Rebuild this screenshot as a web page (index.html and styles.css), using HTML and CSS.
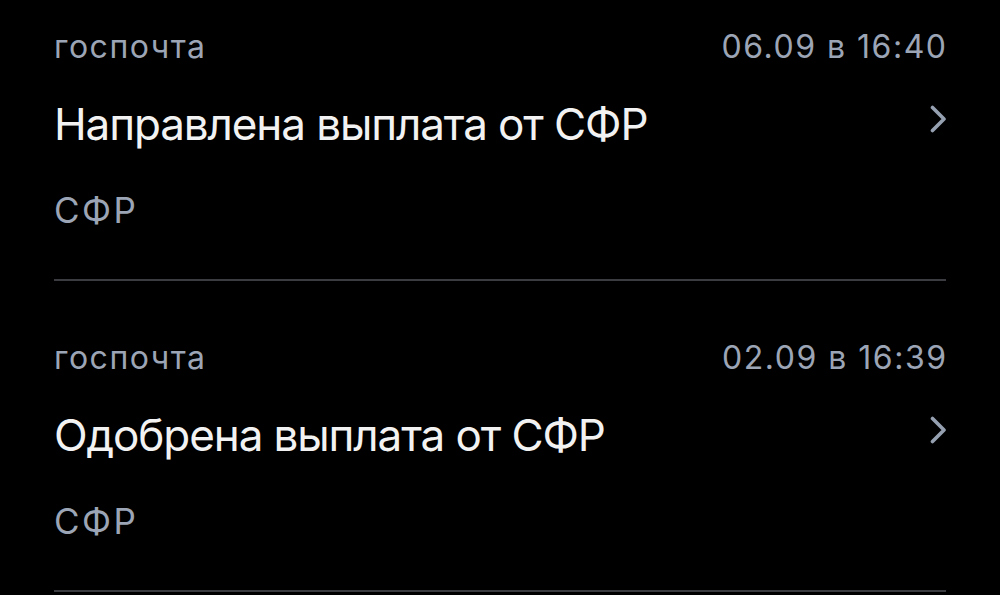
FILE: index.html
```html
<!DOCTYPE html>
<html lang="ru">
<head>
<meta charset="utf-8">
<link rel="stylesheet" href="styles.css">
</head>
<body>
<div class="list">
  <div class="item">
    <div class="meta"><span>госпочта</span><span>06.09 в 16:40</span></div>
    <div class="title-row"><span class="title">Направлена выплата от СФР</span>
      <svg class="chev" width="17" height="28" viewBox="0 0 17 28"><path d="M2.5 2.5 L14 14 L2.5 25.5" fill="none" stroke="#95a0b1" stroke-width="3.6" stroke-linecap="round" stroke-linejoin="round"/></svg>
    </div>
    <div class="sub">СФР</div>
  </div>
  <div class="item">
    <div class="meta"><span>госпочта</span><span>02.09 в 16:39</span></div>
    <div class="title-row"><span class="title">Одобрена выплата от СФР</span>
      <svg class="chev" width="17" height="28" viewBox="0 0 17 28"><path d="M2.5 2.5 L14 14 L2.5 25.5" fill="none" stroke="#95a0b1" stroke-width="3.6" stroke-linecap="round" stroke-linejoin="round"/></svg>
    </div>
    <div class="sub">СФР</div>
  </div>
</div>
</body>
</html>
```
FILE: styles.css
```css
html, body {
  margin: 0;
  padding: 0;
  background: #000;
  height: 595px;
  overflow: hidden;
}
body {
  font-family: Inter, Roboto, "Noto Sans", sans-serif;
}
.list {
  margin: -30px 54px 0 54px;
  display: flex;
  flex-direction: column;
}
.item {
  padding: 57px 0 47px;
  border-bottom: 2px solid #3a3c42;
  display: flex;
  flex-direction: column;
}
.meta {
  display: flex;
  justify-content: space-between;
  font-size: 32px;
  line-height: 40px;
  letter-spacing: 1.5px;
  color: #9ca5b5;
}
.meta span:last-child {
  margin-right: -1.5px;
}
.title-row {
  margin-top: 29px;
  display: flex;
  justify-content: space-between;
  align-items: flex-start;
}
.title {
  font-size: 44px;
  line-height: 56px;
  letter-spacing: -1.1px;
  color: #f2f2f2;
}
.chev {
  margin-top: 9px;
  margin-right: -1px;
}
.sub {
  margin-top: 36px;
  font-size: 35px;
  line-height: 44px;
  letter-spacing: 2.5px;
  color: #9ca5b5;
}
```
